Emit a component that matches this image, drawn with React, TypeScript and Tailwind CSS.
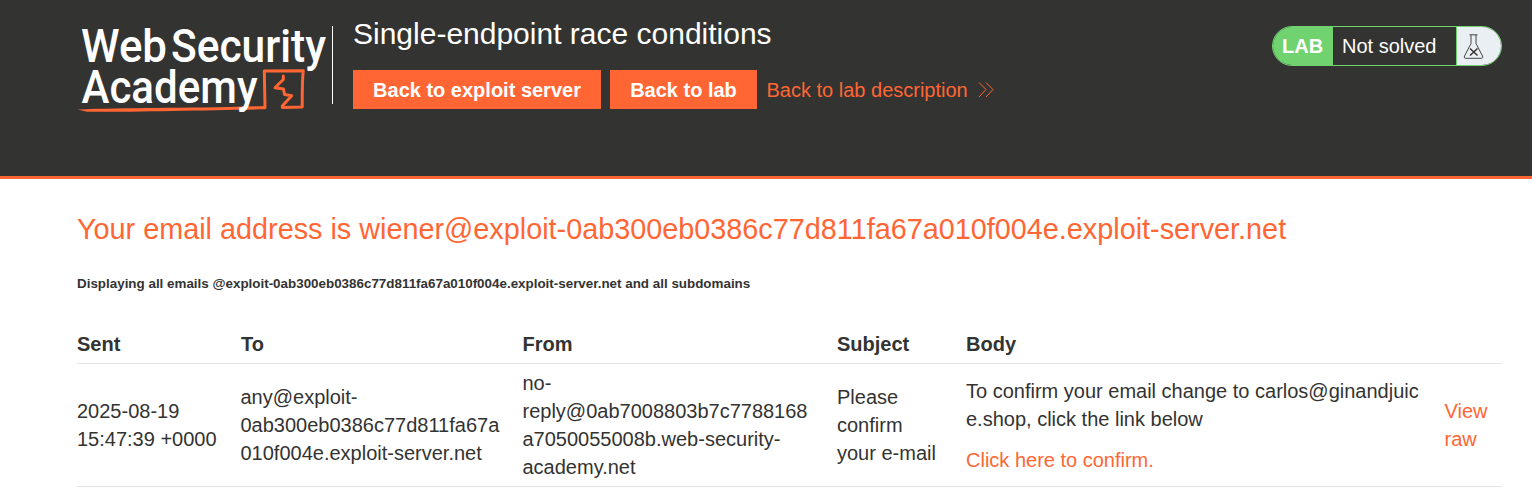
import React from "react";

function Logo() {
  return (
    <svg className="block h-[100px] w-[255px] shrink-0 overflow-visible" viewBox="0 0 255 100" fill="none">
      <g fill="#fff" fontFamily="Roboto, sans-serif" fontWeight="500" fontSize="46.5">
        <text x="4" y="46.500" textLength="86" lengthAdjust="spacingAndGlyphs">Web</text>
        <text x="94" y="46.500" textLength="155" lengthAdjust="spacingAndGlyphs">Security</text>
      </g>
      <g stroke="#ff6633" strokeLinecap="round" strokeLinejoin="round">
        <path d="M188 92.500 L187.300 56 L226.300 55.700 C225 67 225.300 79 225.200 92 L205.500 92.500 L205.300 91 L214.700 80.700 L207.500 79.500 L206.500 74 L198 72.700 L206.300 64.500 L206.300 61" strokeWidth="3" />
      </g>
      <path d="M0.500 94.500 C50 92.500 110 93.500 188 91 L188 94.300 C130 95 60 97 10 96.800 Z" fill="#ff6633" />
      <g fill="#fff" fontFamily="Roboto, sans-serif" fontWeight="500" fontSize="46.500">
        <text x="4.500" y="87.500" textLength="176" lengthAdjust="spacingAndGlyphs">Academy</text>
      </g>
    </svg>
  );
}

function LabStatus() {
  return (
    <div className="mt-[26px] flex h-10 w-[230px] overflow-hidden rounded-[20px] border border-[#70d36f] text-[20px] leading-[38px]">
      <span className="w-[60px] bg-[#70d36f] pl-[9px] font-bold text-white">LAB</span>
      <span className="w-[123px] pl-[9px] text-white">Not solved</span>
      <span className="flex-1 border-l border-[#70d36f] bg-[#eaeff3]">
        <svg className="ml-[6px] mt-[7px] block" width="22" height="26" viewBox="0 0 22 26" fill="none" stroke="#333332">
          <path d="M6.500 .8H14.500M8 1V9.500L1.500 22Q.7 24.300 2.500 24.300H18.500Q20.300 24.300 19.500 22L13 9.500V1" strokeWidth=".9" />
          <path d="M7 14.500L14.500 21.500M14.500 14.500L7 21.500" strokeWidth="1.500" />
        </svg>
      </span>
    </div>
  );
}

export default function App() {
  return (
    <div className="h-[490px] overflow-hidden bg-white font-['Liberation_Sans',Arial,sans-serif] text-[20px] leading-7 text-[#333332]">
      <header className="flex h-[179px] items-start border-b-3 border-[#ff6633] bg-[#333332] pl-[77px] pr-[30px]">
        <div className="pt-[15px]"><Logo /></div>
        <div className="mt-[26px] flex h-[78px] w-px bg-white" />
        <div className="ml-5 flex-1 pt-[14px] whitespace-nowrap">
          <h1 className="h-14 text-[30px] leading-10 text-white">Single-endpoint race conditions</h1>
          <div className="flex items-center text-[#ff6633]">
            <a className="h-[39px] w-[248px] bg-[#ff6633] text-center font-bold leading-10 text-white">Back to exploit server</a>
            <a className="ml-[9px] h-[39px] w-[147px] bg-[#ff6633] text-center font-bold leading-10 text-white">Back to lab</a>
            <a className="ml-[9.500px] flex items-center">
              Back to lab description
              <svg className="ml-[10.500px]" width="16" height="16" viewBox="0 0 16 16" fill="none" stroke="#ff6633" strokeWidth="1">
                <path d="M1 .5L8 7.500L1 15M8 .5L15 7.500L8 15" />
              </svg>
            </a>
          </div>
        </div>
        <LabStatus />
      </header>
      <main className="pl-[77px] pr-[30px]">
        <h2 className="whitespace-nowrap pt-[30px] text-[28.800px] leading-10 text-[#ff6633]">Your email address is wiener@exploit-0ab300eb0386c77d811fa67a010f004e.exploit-server.net</h2>
        <p className="mt-[25px] whitespace-nowrap text-[13.400px] font-bold leading-5">Displaying all emails @exploit-0ab300eb0386c77d811fa67a010f004e.exploit-server.net and all subdomains</p>
        <div className="mt-[30px] grid h-[40px] grid-cols-[163.500px_282px_314.500px_129px_478.500px_1fr] border-b border-[#e4e4e5] pt-[6px] font-bold">
          <span>Sent</span><span className="pl-[.5px]">To</span><span>From</span><span>Subject</span><span>Body</span><span />
        </div>
        <div className="grid h-[123px] grid-cols-[163.500px_282px_314.500px_129px_478.500px_1fr] items-center whitespace-nowrap border-b border-[#e4e4e5]">
          <div>2025-08-19<br />15:47:39 +0000</div>
          <div>any@exploit-<br />0ab300eb0386c77d811fa67a<br />010f004e.exploit-server.net</div>
          <div>no-<br />reply@0ab7008803b7c7788168<br />a7050055008b.web-security-<br />academy.net</div>
          <div>Please<br />confirm<br />your e-mail</div>
          <div>
            <p>To confirm your email change to carlos@ginandjuic<br />e.shop, click the link below</p>
            <a className="mt-[13px] block text-[#ff6633]">Click here to confirm.</a>
          </div>
          <a className="text-[#ff6633]">View<br />raw</a>
        </div>
      </main>
    </div>
  );
}
